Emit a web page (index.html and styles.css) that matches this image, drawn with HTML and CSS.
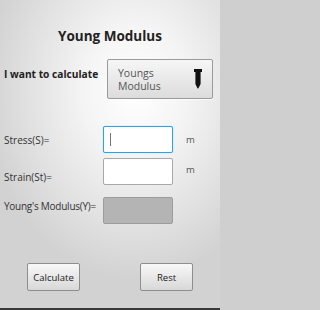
FILE: index.html
```html
<!DOCTYPE html>
<html>
<head>
<meta charset="utf-8">
<link rel="stylesheet" href="styles.css">
</head>
<body>
<div class="screen">
  <h1 class="title">Young Modulus</h1>
  <div class="calc-row">
    <span class="calc-label">I want to calculate</span>
    <div class="spinner">
      <span class="spinner-text">Youngs<br>Modulus</span>
      <svg class="spinner-arrow" width="8" height="20" viewBox="0 0 8 20">
        <path d="M0 0 H8 V3 H6.6 V15 L4.3 19.5 L3.6 19.5 L1.4 15 V3 H0 Z" fill="#111"/>
      </svg>
    </div>
  </div>
  <div class="form">
    <div class="field-row row-stress">
      <span class="field-label">Stress(S)=</span>
      <div class="input focused"><span class="caret"></span></div>
      <span class="unit">m</span>
    </div>
    <div class="field-row row-strain">
      <span class="field-label">Strain(St)=</span>
      <div class="input"></div>
      <span class="unit">m</span>
    </div>
    <div class="field-row row-result">
      <span class="field-label">Young's Modulus(Y)=</span>
      <div class="input disabled"></div>
    </div>
  </div>
  <div class="buttons">
    <button class="btn btn-calc">Calculate</button>
    <button class="btn btn-rest">Rest</button>
  </div>
</div>
<div class="navbar"></div>
</body>
</html>
```

FILE: styles.css
```css
html, body {
  margin: 0;
  padding: 0;
  width: 220px;
  height: 310px;
  overflow: hidden;
}

body {
  font-family: "Open Sans", "DejaVu Sans", sans-serif;
  background: #cfcfcf;
}

.screen {
  height: 308px;
  display: flex;
  flex-direction: column;
  background: radial-gradient(ellipse 150px 190px at 135px 90px, #ffffff 0%, #f4f4f4 35%, #e2e2e2 70%, #d2d2d2 100%);
}

.title {
  margin: 27px 0 0 0;
  height: 18px;
  line-height: 18px;
  font-size: 13.5px;
  font-weight: bold;
  color: #222;
  text-align: center;
}

.calc-row {
  display: flex;
  align-items: flex-start;
  margin-top: 14px;
  padding-left: 4px;
}

.calc-label {
  width: 103px;
  margin-top: 8px;
  font-size: 10.2px;
  font-weight: bold;
  color: #222;
  line-height: 14px;
  white-space: nowrap;
}

.spinner {
  box-sizing: border-box;
  width: 106px;
  height: 40px;
  border: 1px solid #9a9a9a;
  border-radius: 2px;
  background: linear-gradient(#f6f6f6, #dcdcdc);
  display: flex;
  align-items: center;
  padding-left: 10px;
  padding-right: 10px;
  box-shadow: 0 1px 0 rgba(255,255,255,0.8);
}

.spinner-text {
  flex: 1;
  font-size: 10.5px;
  line-height: 13px;
  color: #555;
  margin-top: 1px;
}

.spinner-arrow {
  display: block;
  margin-bottom: 1px;
}

.form {
  display: flex;
  flex-direction: column;
  padding-left: 4px;
  margin-top: 27px;
}

.field-row {
  display: flex;
  height: 27px;
}

.field-label {
  width: 99px;
  font-size: 10px;
  color: #333;
  line-height: 12px;
  white-space: nowrap;
}

.row-result .field-label {
  letter-spacing: -0.25px;
}

.input {
  box-sizing: border-box;
  width: 70px;
  height: 27px;
  background: #fff;
  border: 1px solid #a8a8a8;
  border-radius: 2px;
  position: relative;
}

.input.focused {
  border: 1.5px solid #2aa4e8;
  box-shadow: 0 0 1px #6cc4f5;
}

.input.disabled {
  background: #b4b4b4;
  border-color: #9c9c9c;
}

.caret {
  position: absolute;
  left: 6px;
  top: 6px;
  width: 1px;
  height: 13px;
  background: #777;
}

.unit {
  margin-left: 13px;
  font-size: 9.5px;
  color: #555;
  line-height: 12px;
}

.row-stress {
  align-items: center;
}

.row-strain {
  margin-top: 5px;
}

.row-strain .field-label {
  align-self: flex-end;
  margin-bottom: 2px;
}

.row-strain .unit {
  margin-top: 6px;
}

.row-result {
  margin-top: 12px;
}

.row-result .field-label {
  margin-top: 3px;
}

.buttons {
  display: flex;
  margin-top: 39px;
  padding-left: 27px;
}

.btn {
  box-sizing: border-box;
  width: 53px;
  height: 28px;
  margin: 0;
  padding: 0;
  border: 1px solid #8e8e8e;
  border-radius: 2px;
  background: linear-gradient(#f8f8f8, #d8d8d8);
  font-family: "Open Sans", "DejaVu Sans", sans-serif;
  font-size: 9.5px;
  color: #222;
}

.btn-rest {
  margin-left: 60px;
}

.navbar {
  height: 2px;
  background: #3a3a3a;
}
```
